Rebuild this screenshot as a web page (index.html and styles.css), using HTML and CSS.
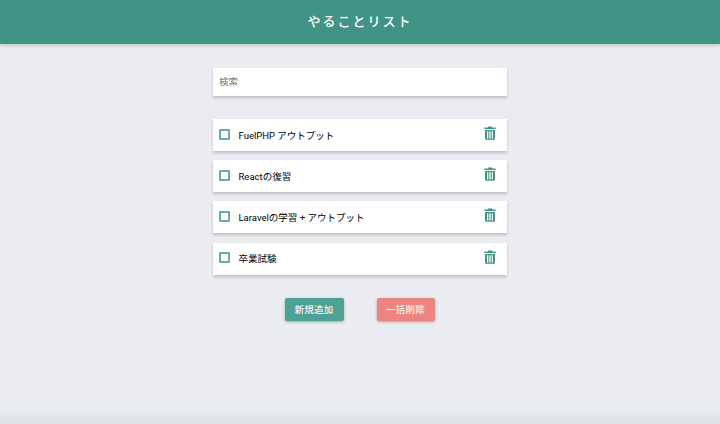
FILE: index.html
```html
<!DOCTYPE html>
<html lang="ja">
<head>
<meta charset="utf-8">
<title>やることリスト</title>
<link rel="stylesheet" href="styles.css">
</head>
<body>
<header class="app-header"><h1 class="app-title">やることリスト</h1></header>
<main class="content">
  <div class="card search-card"><span class="search-placeholder">検索</span></div>
  <ul class="todo-list">
    <li class="card todo">
      <span class="check"></span><span class="todo-text">FuelPHP アウトプット</span>
      <svg class="trash" viewBox="0 0 12 14"><path d="M4 0.6h4v1h3.6v1.5H0.4V1.6H4zM1 4h10v8.6q0 1.2-1.2 1.2H2.2Q1 13.800 1 12.600zM3 5.300v7.200h1.300V5.300zM5.350 5.300v7.200h1.300V5.300zM7.700 5.300v7.200H9V5.300z" fill-rule="evenodd"/></svg>
    </li>
    <li class="card todo">
      <span class="check"></span><span class="todo-text">Reactの復習</span>
      <svg class="trash" viewBox="0 0 12 14"><path d="M4 0.6h4v1h3.6v1.5H0.4V1.6H4zM1 4h10v8.6q0 1.2-1.2 1.2H2.2Q1 13.800 1 12.600zM3 5.300v7.200h1.300V5.300zM5.350 5.300v7.200h1.300V5.300zM7.700 5.300v7.200H9V5.300z" fill-rule="evenodd"/></svg>
    </li>
    <li class="card todo">
      <span class="check"></span><span class="todo-text">Laravelの学習 + アウトプット</span>
      <svg class="trash" viewBox="0 0 12 14"><path d="M4 0.6h4v1h3.6v1.5H0.4V1.6H4zM1 4h10v8.6q0 1.2-1.2 1.2H2.2Q1 13.800 1 12.600zM3 5.300v7.200h1.300V5.300zM5.350 5.300v7.200h1.300V5.300zM7.700 5.300v7.200H9V5.300z" fill-rule="evenodd"/></svg>
    </li>
    <li class="card todo">
      <span class="check"></span><span class="todo-text">卒業試験</span>
      <svg class="trash" viewBox="0 0 12 14"><path d="M4 0.6h4v1h3.6v1.5H0.4V1.6H4zM1 4h10v8.6q0 1.2-1.2 1.2H2.2Q1 13.800 1 12.600zM3 5.300v7.200h1.300V5.300zM5.350 5.300v7.200h1.300V5.300zM7.700 5.300v7.200H9V5.300z" fill-rule="evenodd"/></svg>
    </li>
  </ul>
  <div class="actions">
    <button class="btn btn-add">新規追加</button>
    <button class="btn btn-clear">一括削除</button>
  </div>
</main>
</body>
</html>
```
FILE: styles.css
```css
* { box-sizing: border-box; }
html, body { height: 100%; }
body {
  margin: 0;
  height: 424px;
  overflow: hidden;
  background: linear-gradient(to bottom, #ebecf1 0, #ebecf1 394px, #e7eaee 410px, #dfe1e4 424px);
  font-family: Roboto, "Noto Sans CJK JP", sans-serif;
  color: #1c1c1c;
}
.app-header {
  height: 44px;
  padding-bottom: 3px;
  background: #419386;
  box-shadow: 0 1px 4px rgba(0, 0, 0, .22);
  display: flex;
  align-items: center;
  justify-content: center;
}
.app-title {
  margin: 0;
  font-family: "Noto Sans CJK JP", sans-serif;
  font-weight: 500;
  font-size: 13px;
  letter-spacing: 2px;
  color: #fff;
}
.content {
  width: 294px;
  margin: 24px auto 0;
}
.card {
  background: #fff;
  box-shadow: 0 2px 3px rgba(0, 0, 0, .2);
}
.search-card {
  height: 28px;
  padding: 0 6px 2px;
  display: flex;
  align-items: center;
}
.search-placeholder { font-size: 9.500px; color: #777; }
.todo-list {
  list-style: none;
  margin: 23px 0 0;
  padding: 0;
  display: flex;
  flex-direction: column;
  gap: 9.200px;
}
.todo {
  height: 32px;
  padding: 0 11px 2px 6px;
  display: flex;
  align-items: center;
}
.check {
  width: 11px;
  height: 11px;
  border: 2px solid #6aaca1;
  border-radius: 1px;
  margin-right: 8.500px;
  flex: none;
}
.todo-text { flex: 1; padding-top: 1px; font-size: 9.500px; font-weight: 400; color: #000; }
.trash { width: 12px; height: 14px; fill: #419386; margin-top: -2px; flex: none; }
.actions {
  margin-top: 23.500px;
  display: flex;
  justify-content: center;
  gap: 33px;
  padding-right: 1px;
}
.btn {
  width: 59px;
  height: 23px;
  padding: 0 0 1px;
  border: 0;
  border-radius: 2px;
  font: 500 9.500px Roboto, "Noto Sans CJK JP", sans-serif;
  letter-spacing: .3px;
  color: #f4f4f4;
  box-shadow: 0 1px 3px rgba(0, 0, 0, .3);
}
.btn-add { background: #4ea195; }
.btn-clear { background: #ec8482; width: 58px; }
```
